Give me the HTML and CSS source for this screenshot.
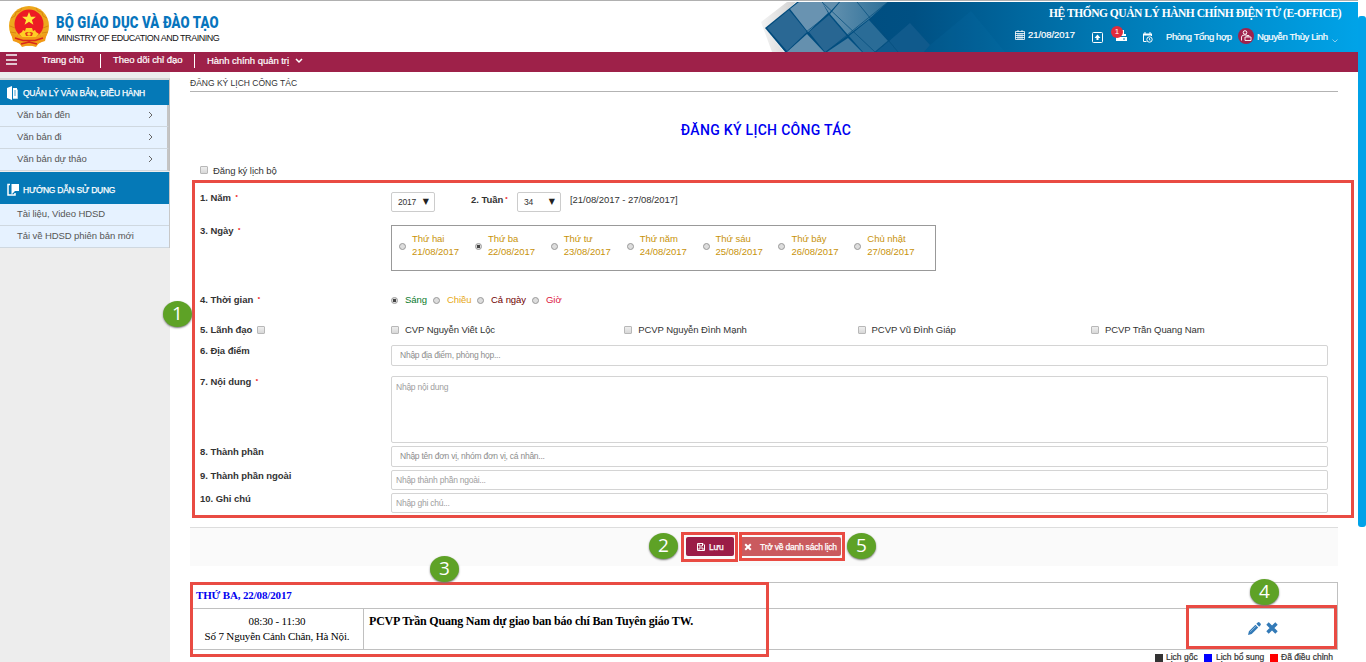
FILE: index.html
```html
<!DOCTYPE html>
<html lang="vi">
<head>
<meta charset="utf-8">
<title>Đăng ký lịch công tác</title>
<link rel="stylesheet" href="styles.css">
</head>
<body>
<div class="page">
<header class="header">
  <svg class="emblem" viewBox="0 0 42 42" width="42" height="42">
    <circle cx="21" cy="20" r="20" fill="#eda81c"/>
    <path d="M3 12l4-2 1-4 4-1 2-3M2 20l5 2M2 26l6 1M5 32l5-2M39 12l-4-2-1-4-4-1-2-3M40 20l-5 2M40 26l-6 1M37 32l-5-2" stroke="#d98711" fill="none"/>
    <circle cx="21" cy="18" r="14.500" fill="#ed1c24"/>
    <path d="M21 6l1.900 4.800h5l-4 3.100 1.500 4.800L21 15.800l-4.400 2.900 1.500-4.800-4-3.100h5z" fill="#ffe93a"/>
    <path d="M11 28l3-2 1-2 2 1 1-3h6l1 3 2-1 1 2 3 2-4 4H15z" fill="#ffcf24"/>
    <path d="M17 27l2-1h4l2 1-1 3h-6z" fill="#e53a1c"/>
    <circle cx="21" cy="28" r="1.800" fill="#ffcf24"/>
    <path d="M3 27l8 4h20l8-4-2 8-6 2-3 4-7-2-7 2-3-4-6-2z" fill="#f29a16"/>
    <path d="M7 32l8 2.500h12L35 32M13 38l8-2 8 2" fill="none" stroke="#d8261c" stroke-width="1.500"/>
  </svg>
  <div class="brand">
    <div class="brand-name">BỘ GIÁO DỤC VÀ ĐÀO TẠO</div>
    <div class="brand-en">MINISTRY OF EDUCATION AND TRAINING</div>
  </div>
  <div class="banner">
    <svg class="pattern" viewBox="0 0 597 50" width="597" height="50">
      <defs>
        <linearGradient id="sea" x1="0" x2="1"><stop offset="0" stop-color="#004a7c"/><stop offset=".25" stop-color="#005083"/><stop offset=".55" stop-color="#0076b0"/><stop offset="1" stop-color="#00a3e8"/></linearGradient>
        <linearGradient id="edge" x1="0" x2="1"><stop offset="0" stop-color="#f4f4f4"/><stop offset="1" stop-color="#d0d0d0"/></linearGradient>
        <linearGradient id="tile" x1="0" x2="1"><stop offset="0" stop-color="#6391af"/><stop offset="1" stop-color="#2d6f98"/></linearGradient>
      </defs>
      <path d="M0 20L26 0h9L5 27l18 23H11z" fill="url(#edge)"/>
      <path d="M4 26L36 0H597V50H24z" fill="url(#sea)"/>
      <path d="M6 26L28 8 46 30 26 49z" fill="#2a6894"/>
      <path d="M29 7L38 0h23L67 11 47 30z" fill="#6993b1"/>
      <path d="M61 0h17L68 11z" fill="#6490ae"/>
      <path d="M48 30L68 13 86 34 64 50z" fill="#286692"/>
      <path d="M46 32L63 50H26z" fill="#6590ae"/>
      <path d="M69 12L79 0h48L108 17 87 33z" fill="url(#tile)"/>
      <path d="M87 36L101 50H66z" fill="#447ba0"/>
      <path d="M88 34L108 18 127 39 114 50H102z" fill="#2a6c97"/>
      <path d="M127 40L149 21 169 43 163 50H115z" fill="#105a8c"/>
      <path d="M169 43L210 9 244 50H163z" fill="#1683b8" opacity=".1"/>
      <path d="M61 0L114 50M96 0l32 39 9 11M127 0L65 50M127 39l-13 11M45 30L68 12" stroke="#064f7d" fill="none" opacity=".75"/>
    </svg>
    <div class="banner-text">
      <div class="system">HỆ THỐNG QUẢN LÝ HÀNH CHÍNH ĐIỆN TỬ (E-OFFICE)</div>
      <div class="tools">
        <svg class="i-cal" viewBox="0 0 10 10" width="10" height="10"><path d="M.5 1.500h9v8h-9zM0 3.500h10M.5 5.500h9M.5 7.500h9M3 3.500v6M5 3.500v6M7 3.500v6M3 0v2M7 0v2" fill="none" stroke="#fff" stroke-width=".8"/></svg>
        <span class="date">21/08/2017</span>
        <svg class="i-up" viewBox="0 0 11 11" width="11" height="11"><rect x=".5" y=".5" width="10" height="10" rx="1" fill="none" stroke="#fff"/><path d="M5.500 2.500L8.500 6H2.500zM4.500 6h2v2h-2z" fill="#fff"/></svg>
        <span class="inbox"><svg viewBox="0 0 12 12" width="12" height="12"><path d="M4 0h4v4h2v2H2V4h2zM0 7h11v4H0z" fill="#fff"/><path d="M7 9h2" stroke="#0878b0"/></svg><b class="badge">1</b></span>
        <svg class="i-sched" viewBox="0 0 11 11" width="11" height="11"><path d="M4.500 9.500H1.500V2.500h8V4" fill="none" stroke="#fff"/><path d="M1 1.500h9v2H1zM2.500 0h1v2h-1zM7.500 0h1v2h-1z" fill="#fff"/><circle cx="7.500" cy="7.500" r="2.700" fill="none" stroke="#fff"/><path d="M7.500 6v2h1" fill="none" stroke="#fff" stroke-width=".8"/></svg>
        <span class="dept">Phòng Tổng hợp</span>
        <svg class="avatar" viewBox="0 0 16 16" width="16" height="16"><circle cx="8" cy="8" r="8" fill="#a0224c"/><circle cx="7" cy="4.500" r="1.800" fill="none" stroke="#fff"/><path d="M3.500 12.500V9q0-2 3-2h2.500M7 9h6v3.500H7zM9 9V7.500h2V9" fill="none" stroke="#fff" stroke-width=".9"/></svg>
        <span class="user">Nguyễn Thùy Linh</span>
        <svg class="i-caret" viewBox="0 0 6 4" width="6" height="4"><path d="M.5.500L3 3 5.500.500" fill="none" stroke="#8bd0ef"/></svg>
      </div>
    </div>
  </div>
</header>
<nav class="nav">
  <div class="burger"><i></i><i></i><i></i></div>
  <span class="n1">Trang chủ</span><span class="n2">Theo dõi chỉ đạo</span><span class="n3">Hành chính quản trị</span>
  <svg viewBox="0 0 8 6" width="8" height="6"><path d="M1 1l3 3 3-3" fill="none" stroke="#fff" stroke-width="1.500"/></svg>
</nav>
<div class="body">
  <aside class="side">
    <section class="menu menu-docs">
      <h3><svg viewBox="0 0 12 14" width="12" height="14"><path d="M0 2l5-2v14l-5-2zM6 2h4v10H6z" fill="#fff"/><path d="M7 5h2M7 7h2M7 9h2" stroke="#0579b7" stroke-width=".7"/><path d="M10.500 3.500v9H6" stroke="#fff" fill="none" stroke-width=".7"/></svg><span>QUẢN LÝ VĂN BẢN, ĐIỀU HÀNH</span></h3>
      <a><span>Văn bản đến</span><svg viewBox="0 0 5 8" width="5" height="8"><path d="M1 1l3 3-3 3" fill="none" stroke="#666"/></svg></a>
      <a><span>Văn bản đi</span><svg viewBox="0 0 5 8" width="5" height="8"><path d="M1 1l3 3-3 3" fill="none" stroke="#666"/></svg></a>
      <a><span>Văn bản dự thảo</span><svg viewBox="0 0 5 8" width="5" height="8"><path d="M1 1l3 3-3 3" fill="none" stroke="#666"/></svg></a>
    </section>
    <section class="menu menu-help">
      <h3><svg viewBox="0 0 12 14" width="12" height="14"><path d="M3 1.500H1v10.500h7v-2" fill="none" stroke="#fff" stroke-width="1.500"/><path d="M4.500 1H12v7H8l-3.500 3.500z" fill="#fff"/></svg><span>HƯỚNG DẪN SỬ DỤNG</span></h3>
      <a><span>Tài liệu, Video HDSD</span></a>
      <a><span>Tải về HDSD phiên bản mới</span></a>
    </section>
  </aside>
  <main class="main">
    <div class="crumb"><span>ĐĂNG KÝ LỊCH CÔNG TÁC</span></div>
    <h1><span>ĐĂNG KÝ LỊCH CÔNG TÁC</span></h1>
    <div class="ministry"><i class="cb"></i><span>Đăng ký lịch bộ</span></div>
    <form class="form">
      <div class="row r1"><label>1. Năm <em>*</em></label>
        <div class="year"><span class="sel"><span class="val">2017</span><b>▼</b></span><strong>2. Tuần<em>*</em></strong><span class="sel"><span class="val">34</span><b>▼</b></span><span class="range">[21/08/2017 - 27/08/2017]</span></div></div>
      <div class="row r2"><label>3. Ngày <em>*</em></label>
        <div class="days">
          <div class="day"><i class="rd"></i><span>Thứ hai<br>21/08/2017</span></div>
          <div class="day"><i class="rd on"></i><span>Thứ ba<br>22/08/2017</span></div>
          <div class="day"><i class="rd"></i><span>Thứ tư<br>23/08/2017</span></div>
          <div class="day"><i class="rd"></i><span>Thứ năm<br>24/08/2017</span></div>
          <div class="day"><i class="rd"></i><span>Thứ sáu<br>25/08/2017</span></div>
          <div class="day"><i class="rd"></i><span>Thứ bảy<br>26/08/2017</span></div>
          <div class="day"><i class="rd"></i><span>Chủ nhật<br>27/08/2017</span></div>
        </div></div>
      <div class="row r3"><label>4. Thời gian <em>*</em></label>
        <div class="times"><i class="rd on"></i><span class="t1">Sáng</span><i class="rd"></i><span class="t2">Chiều</span><i class="rd"></i><span class="t3">Cả ngày</span><i class="rd"></i><span class="t4">Giờ</span></div></div>
      <div class="row r4"><label>5. Lãnh đạo<i class="cb"></i></label>
        <div class="leaders"><div><i class="cb"></i><span>CVP Nguyễn Viết Lộc</span></div><div><i class="cb"></i><span>PCVP Nguyễn Đình Mạnh</span></div><div><i class="cb"></i><span>PCVP Vũ Đình Giáp</span></div><div><i class="cb"></i><span>PCVP Trần Quang Nam</span></div></div></div>
      <div class="row r5"><label>6. Địa điểm</label><div class="field f1"><span>Nhập địa điểm, phòng họp...</span></div></div>
      <div class="row r6"><label>7. Nội dung <em>*</em></label><div class="field f2"><span>Nhập nội dung</span></div></div>
      <div class="row r7"><label>8. Thành phần</label><div class="field f1"><span>Nhập tên đơn vị, nhóm đơn vị, cá nhân...</span></div></div>
      <div class="row r8"><label>9. Thành phần ngoài</label><div class="field f3"><span>Nhập thành phần ngoài...</span></div></div>
      <div class="row r9"><label>10. Ghi chú</label><div class="field f3"><span>Nhập ghi chú...</span></div></div>
    </form>
    <div class="actions">
      <span class="btn save"><svg viewBox="0 0 8 8" width="8" height="8"><path d="M.5.500h5.500l1.500 1.500v5.500h-7zM2 .500V3h3.500V.500M2 7.500V5h4v2.500" fill="none" stroke="#fff"/></svg><span>Lưu</span></span>
      <span class="btn back"><svg viewBox="0 0 8 8" width="8" height="8"><path d="M1.200 1.200l5.600 5.600M6.800 1.200L1.200 6.800" stroke="#fff" stroke-width="2"/></svg><span>Trở về danh sách lịch</span></span>
    </div>
    <div class="sched">
      <div class="sched-day"><span>THỨ BA, 22/08/2017</span></div>
      <div class="sched-row">
        <div class="when"><span>08:30 - 11:30</span><br><span>Số 7 Nguyễn Cảnh Chân, Hà Nội.</span></div>
        <div class="what"><span>PCVP Trần Quang Nam dự giao ban báo chí Ban Tuyên giáo TW.</span></div>
        <div class="ops"><svg viewBox="0 0 14 14" width="13" height="13"><path d="M0 14l1-4 7-7 3 3-7 7zM9 2l1.500-1.500q1-.8 2 0l1 1q.8 1 0 2L12 5z" fill="#337ab7"/><path d="M2.500 10.500l6-6" stroke="#a9cbe6" stroke-width=".8"/></svg><svg viewBox="0 0 12 12" width="12" height="12"><path d="M1.500 1.500l9 9M10.500 1.500l-9 9" stroke="#337ab7" stroke-width="3.400"/></svg></div>
      </div>
    </div>
    <div class="legend"><i class="k"></i><span class="l1">Lịch gốc</span><i class="b"></i><span class="l2">Lịch bổ sung</span><i class="r"></i><span class="l3">Đã điều chỉnh</span></div>
  </main>
</div>
</div>
<div class="scroll"></div>
<div class="box box1"></div><div class="box box2"></div><div class="box box5"></div><div class="box box3"></div><div class="box box4"></div>
<div class="pin pin1">1</div><div class="pin pin2">2</div><div class="pin pin3">3</div><div class="pin pin4">4</div><div class="pin pin5">5</div>
</body>
</html>
```
FILE: styles.css
```css
* { box-sizing: border-box; }
body { margin: 0; width: 1366px; height: 662px; overflow: hidden; position: relative; background: #fff; font-family: "Liberation Sans", Arial, sans-serif; font-size: 9.500px; color: #333; white-space: nowrap; }
i, em { font-style: normal; }
svg { display: block; flex: none; }
.page { width: 1358px; }

.header { height: 52px; border-top: 1px solid #b0b0b0; display: flex; }
.emblem { margin: 5px 6px 0 8px; }
.brand { width: 705px; padding-top: 13px; }
.brand-name { font: 900 16px/18px Roboto, sans-serif; color: #0775bd; transform: scaleX(.82); transform-origin: left; letter-spacing: .2px; }
.brand-en { font-size: 9px; line-height: 12px; color: #111; letter-spacing: -.49px; padding-left: 1px; }
.banner { width: 597px; display: grid; margin-top: 1px; }
.pattern, .banner-text { grid-area: 1 / 1; }
.banner-text { color: #fff; }
.system { font: bold 11.500px/15px "Liberation Serif", serif; letter-spacing: -.47px; text-align: right; padding: 4px 17px 0 0; }
.tools { display: flex; align-items: center; height: 18px; margin-top: 6px; padding-left: 254px; font-size: 9.500px; }
.date { margin: -3px 0 0 3px; width: 64px; -webkit-text-stroke: .2px #fff; letter-spacing: -.05px; }
.i-cal { margin-top: -3px; }
.i-up { margin-top: 2px; }
.inbox { position: relative; margin: 0 14px 0 13px; }
.badge { position: absolute; left: -5px; top: -4px; width: 12px; height: 12px; border-radius: 6px; background: #e02b3c; font: 8px/12px "Liberation Sans", sans-serif; text-align: center; }
.i-sched { margin-top: 2px; }
.dept { margin-left: 13px; width: 72px; letter-spacing: -.38px; -webkit-text-stroke: .2px #fff; }
.user { margin-left: 3px; width: 75px; letter-spacing: -.4px; -webkit-text-stroke: .2px #fff; }
.i-caret { margin-top: 9px; }

.nav { height: 20px; background: #9e2149; color: #fff; display: flex; -webkit-text-stroke: .2px #fff; letter-spacing: -.05px; }
.burger { width: 36px; padding: 2px 0 0 6px; }
.burger i { display: block; width: 11px; height: 2px; background: #e2c5cf; margin-bottom: 3px; }
.burger i + i + i { margin-top: -1px; }
.n1 { width: 65px; padding-left: 6px; height: 14px; margin-top: 2px; border-right: 1px solid #fff; line-height: 12px; }
.n2 { width: 94px; padding-left: 12px; height: 14px; margin-top: 2px; border-right: 1px solid #fff; line-height: 12px; }
.n3 { width: 100px; padding-left: 12px; line-height: 18px; }
.nav svg { margin-top: 6px; }

.body { display: flex; height: 590px; }
.side { width: 170px; background: #ededed; padding-top: 6px; }
.menu h3 { margin: 0; background: #0579b7; color: #fff; display: flex; align-items: center; font-size: 8.500px; font-weight: 400; padding-left: 7px; letter-spacing: -.25px; -webkit-text-stroke: .25px #fff; }
.menu h3 span { margin-left: 4px; }
.menu-docs { border-top: 2px solid #d5d5d5; border-right: 1px solid #c0c0c0; margin-bottom: 1px; }
.menu-docs h3 { height: 25px; }
.menu-help { border-right: 1px solid #c8c8c8; }
.menu-help h3 { height: 32px; padding-top: 3px; }
.menu a { display: flex; align-items: center; justify-content: space-between; height: 22px; background: #e6f2ff; color: #555; border-bottom: 1px solid #cfd8e0; padding: 0 14px 3px 17px; letter-spacing: -.08px; }
.menu-docs a { border-right: 2px solid #c4c4c4; padding-bottom: 2px; }

.main { margin-left: 20px; width: 1148px; }
.crumb { height: 20px; border-bottom: 1px solid #b3b3b3; line-height: 22px; font-size: 8.500px; }
h1 { margin: 0; height: 70px; text-align: center; font: 500 14px/20px Roboto, sans-serif; color: #0000f0; padding: 28px 0 0 4px; letter-spacing: .3px; }
.ministry { height: 29px; display: flex; align-items: center; padding: 0 0 13px 10px; gap: 5px; letter-spacing: -.08px; }
.cb { display: inline-block; width: 8px; height: 8px; border: 1px solid #b8b8b8; border-radius: 1px; background: linear-gradient(#eee, #d8d8d8); flex: none; }
.rd { width: 7px; height: 7px; border: 1px solid #999; border-radius: 50%; background: #ddd; flex: none; }
.rd.on { background: radial-gradient(circle, #444 0 1.500px, #ddd 2px); }
.form { height: 336px; padding-left: 10px; }
.row { display: grid; grid-template-columns: 191px 937px; align-items: start; }
label, strong { font-weight: bold; line-height: 14px; letter-spacing: -.05px; color: #333; }
label em, strong em { color: #e00; font-size: 6px; line-height: 0; vertical-align: 2px; margin-left: 2px; }
label .cb { margin: 0 0 0 5px; vertical-align: -1px; }
.r1 { height: 33px; } .r2 { height: 69px; } .r3 { height: 30px; } .r4 { height: 21px; } .r5 { height: 31px; } .r6 { height: 70px; } .r7 { height: 24px; } .r8 { height: 23px; }
.year { display: flex; padding-top: 1px; }
.sel { width: 44px; height: 20px; border: 1px solid #ccc; border-radius: 2px; display: flex; justify-content: space-between; align-items: center; padding: 0 5px 0 6px; font-size: 8.500px; }
.sel .val { letter-spacing: -.25px; }
.sel b { font: 8px/10px "DejaVu Sans", sans-serif; color: #222; }
.year strong { width: 46px; margin-left: 36px; line-height: 16px; }
.range { margin-left: 9px; line-height: 15px; letter-spacing: -.05px; }
.days { width: 545px; height: 46px; border: 1px solid #999; margin-top: 1px; padding: 6px 0 0 7px; display: grid; grid-template-columns: repeat(7, 75.900px); color: #c8930a; line-height: 13px; letter-spacing: -.05px; }
.day { display: flex; gap: 6px; align-items: flex-start; }
.day .rd { margin-top: 11px; }
.times { display: flex; height: 13px; align-items: center; letter-spacing: -.05px; }
.times .rd { margin-top: 2px; }
.times span { margin-left: 7px; }
.t1 { color: #087a2b; width: 28px; } .t2 { color: #e6a817; width: 30px; } .t3 { color: #700000; width: 41px; } .t4 { color: #dc143c; }
.leaders { display: grid; grid-template-columns: repeat(4, 233.300px); line-height: 14px; letter-spacing: -.08px; }
.leaders div { display: flex; align-items: center; gap: 6px; }
.field { border: 1px solid #d4d4d4; border-radius: 2px; margin-top: 1px; font-size: 8.500px; letter-spacing: -.24px; color: #8d8d8d; line-height: 19px; }
.f1 { height: 21px; padding-left: 8px; }
.f2 { height: 67px; padding: 1px 0 0 4px; color: #a0a0a0; }
.f3 { height: 20px; padding-left: 4px; color: #a0a0a0; }
.actions { height: 39px; background: #fafafa; border-top: 1px solid #ddd; display: flex; padding: 9px 0 0 496px; gap: 6px; }
.btn { height: 19px; border-radius: 2px; color: #fff; display: flex; align-items: center; font-size: 8.500px; letter-spacing: -.22px; -webkit-text-stroke: .25px #fff; }
.save { width: 48px; background: #9b1c47; padding-left: 11px; gap: 4px; }
.back { width: 101px; background: #ca5a5e; padding-left: 4px; gap: 8px; }
.sched { margin-top: 16px; border: 1px solid #c0c0c0; font-family: "Liberation Serif", serif; color: #000; height: 68px; font-size: 11px; }
.sched-day { height: 26px; border-bottom: 1px solid #c0c0c0; color: #0000f0; font-weight: bold; line-height: 24px; padding-left: 5px; font-size: 11px; letter-spacing: -.15px; }
.sched-row { height: 40px; display: grid; grid-template-columns: 173px 820px 1fr; }
.when { text-align: center; border-right: 1px solid #c0c0c0; padding-top: 5px; line-height: 15px; letter-spacing: -.16px; }
.what { font-weight: bold; padding: 5px 0 0 5px; line-height: 15px; font-size: 12px; letter-spacing: -.19px; }
.ops { display: flex; align-items: center; gap: 5px; padding-left: 64px; padding-bottom: 2px; }
.legend { display: flex; align-items: center; height: 14px; margin-left: 965px; font-size: 8.500px; -webkit-text-stroke: .2px #333; }
.legend i { width: 8px; height: 8px; margin-top: 2px; }
.legend span { margin-left: 4px; }
.k { background: #333; } .b { background: #00f; } .r { background: #f00; }
.legend .l1 { width: 38px; margin-left: 3px; } .l2 { width: 54px; } .legend .l3 { margin-left: 3px; }

.scroll { position: absolute; left: 1358px; top: 16px; width: 8px; height: 511px; background: #00a2e8; border-radius: 3px; }
.box { position: absolute; border: 3px solid #e94b43; }
.box1 { left: 192px; top: 180px; width: 1162px; height: 338px; }
.box2 { left: 681px; top: 532px; width: 57px; height: 30px; }
.box5 { left: 739px; top: 532px; width: 106px; height: 29px; }
.box3 { left: 190px; top: 582px; width: 579px; height: 75px; }
.box4 { left: 1186px; top: 605px; width: 151px; height: 44px; }
.pin { position: absolute; width: 29px; height: 26px; border-radius: 50%; background: #5ea226; color: #fff; font: 19px/25px "Open Sans", sans-serif; text-align: center; box-shadow: 0 1px 2px #777; }
.pin1 { left: 163px; top: 301px; }
.pin2 { left: 649px; top: 533px; }
.pin3 { left: 430px; top: 556px; }
.pin4 { left: 1250px; top: 579px; }
.pin5 { left: 847px; top: 533px; }
```
